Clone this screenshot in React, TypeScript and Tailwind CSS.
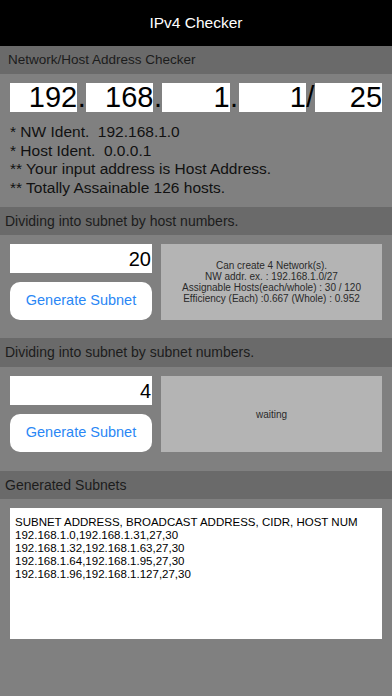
import React from "react";

const font = { fontFamily: '"Liberation Sans", Arial, sans-serif' };

function SectionHeader({ title, h = "h-[28px]", cls = "px-[5px] text-[14px]" }: { title: string; h?: string; cls?: string }) {
  return (
    <div className={`${h} ${cls} bg-[#6a6a6a] flex items-center text-[#1c1c1c]`}>
      {title}
    </div>
  );
}

function Octet({ value }: { value: string }) {
  return (
    <div className="flex-1 h-[29px] bg-white flex items-center justify-end text-[29px] leading-none text-black">
      {value}
    </div>
  );
}

function Sep({ ch }: { ch: string }) {
  return (
    <div className="w-[9px] h-[29px] flex items-end justify-center text-[29px] leading-[29px] text-black">
      {ch}
    </div>
  );
}

function SubnetBlock({ value, info }: { value: string; info: React.ReactNode }) {
  return (
    <div className="flex gap-[9px] px-[10px] pt-[9px]">
      <div className="w-[142px] flex flex-col gap-[9px]">
        <div className="h-[29px] bg-white flex items-center justify-end pr-[1px] text-[20px] text-black">
          {value}
        </div>
        <div className="h-[38px] bg-white rounded-[10px] flex items-center justify-center text-[14.5px] text-[#2a87f5]">
          Generate Subnet
        </div>
      </div>
      <div className="flex-1 bg-[#b4b4b4] flex flex-col items-center justify-center text-[10px] leading-[11px] text-[#2a2a2a]">
        {info}
      </div>
    </div>
  );
}

export default function App() {
  return (
    <div className="w-[392px] h-[696px] bg-[#808080] overflow-hidden" style={font}>
      <div className="h-[46px] bg-black flex items-center justify-center text-white text-[15.5px]">
        IPv4 Checker
      </div>
      <SectionHeader title="Network/Host Address Checker" cls="px-[8px] text-[13.5px]" />
      <div className="px-[10px] pt-[9px] pb-[10px]">
        <div className="flex">
          <Octet value="192" />
          <Sep ch="." />
          <Octet value="168" />
          <Sep ch="." />
          <Octet value="1" />
          <Sep ch="." />
          <Octet value="1" />
          <Sep ch="/" />
          <Octet value="25" />
        </div>
        <div className="mt-[11px] text-[15.5px] leading-[18.5px] text-[#111]">
          <div className="whitespace-pre">{"* NW Ident.  192.168.1.0"}</div>
          <div className="whitespace-pre">{"* Host Ident.  0.0.0.1"}</div>
          <div>** Your input address is Host Address.</div>
          <div>** Totally Assainable 126 hosts.</div>
        </div>
      </div>
      <SectionHeader title="Dividing into subnet by host numbers." />
      <div className="pb-[18px]">
        <SubnetBlock
          value="20"
          info={
            <>
              <div>Can create 4 Network(s).</div>
              <div>NW addr. ex. : 192.168.1.0/27</div>
              <div>Assignable Hosts(each/whole) : 30 / 120</div>
              <div>Efficiency (Each) :0.667 (Whole) : 0.952</div>
            </>
          }
        />
      </div>
      <SectionHeader title="Dividing into subnet by subnet numbers." h="h-[29px]" />
      <div className="pb-[19px]">
        <SubnetBlock value="4" info={<div>waiting</div>} />
      </div>
      <SectionHeader title="Generated Subnets" />
      <div className="px-[10px] pt-[9px]">
        <div className="h-[131px] bg-white px-[5px] pt-[8px] text-[11.5px] leading-[13px] text-black">
          <div>SUBNET ADDRESS, BROADCAST ADDRESS, CIDR, HOST NUM</div>
          <div>192.168.1.0,192.168.1.31,27,30</div>
          <div>192.168.1.32,192.168.1.63,27,30</div>
          <div>192.168.1.64,192.168.1.95,27,30</div>
          <div>192.168.1.96,192.168.1.127,27,30</div>
        </div>
      </div>
    </div>
  );
}
